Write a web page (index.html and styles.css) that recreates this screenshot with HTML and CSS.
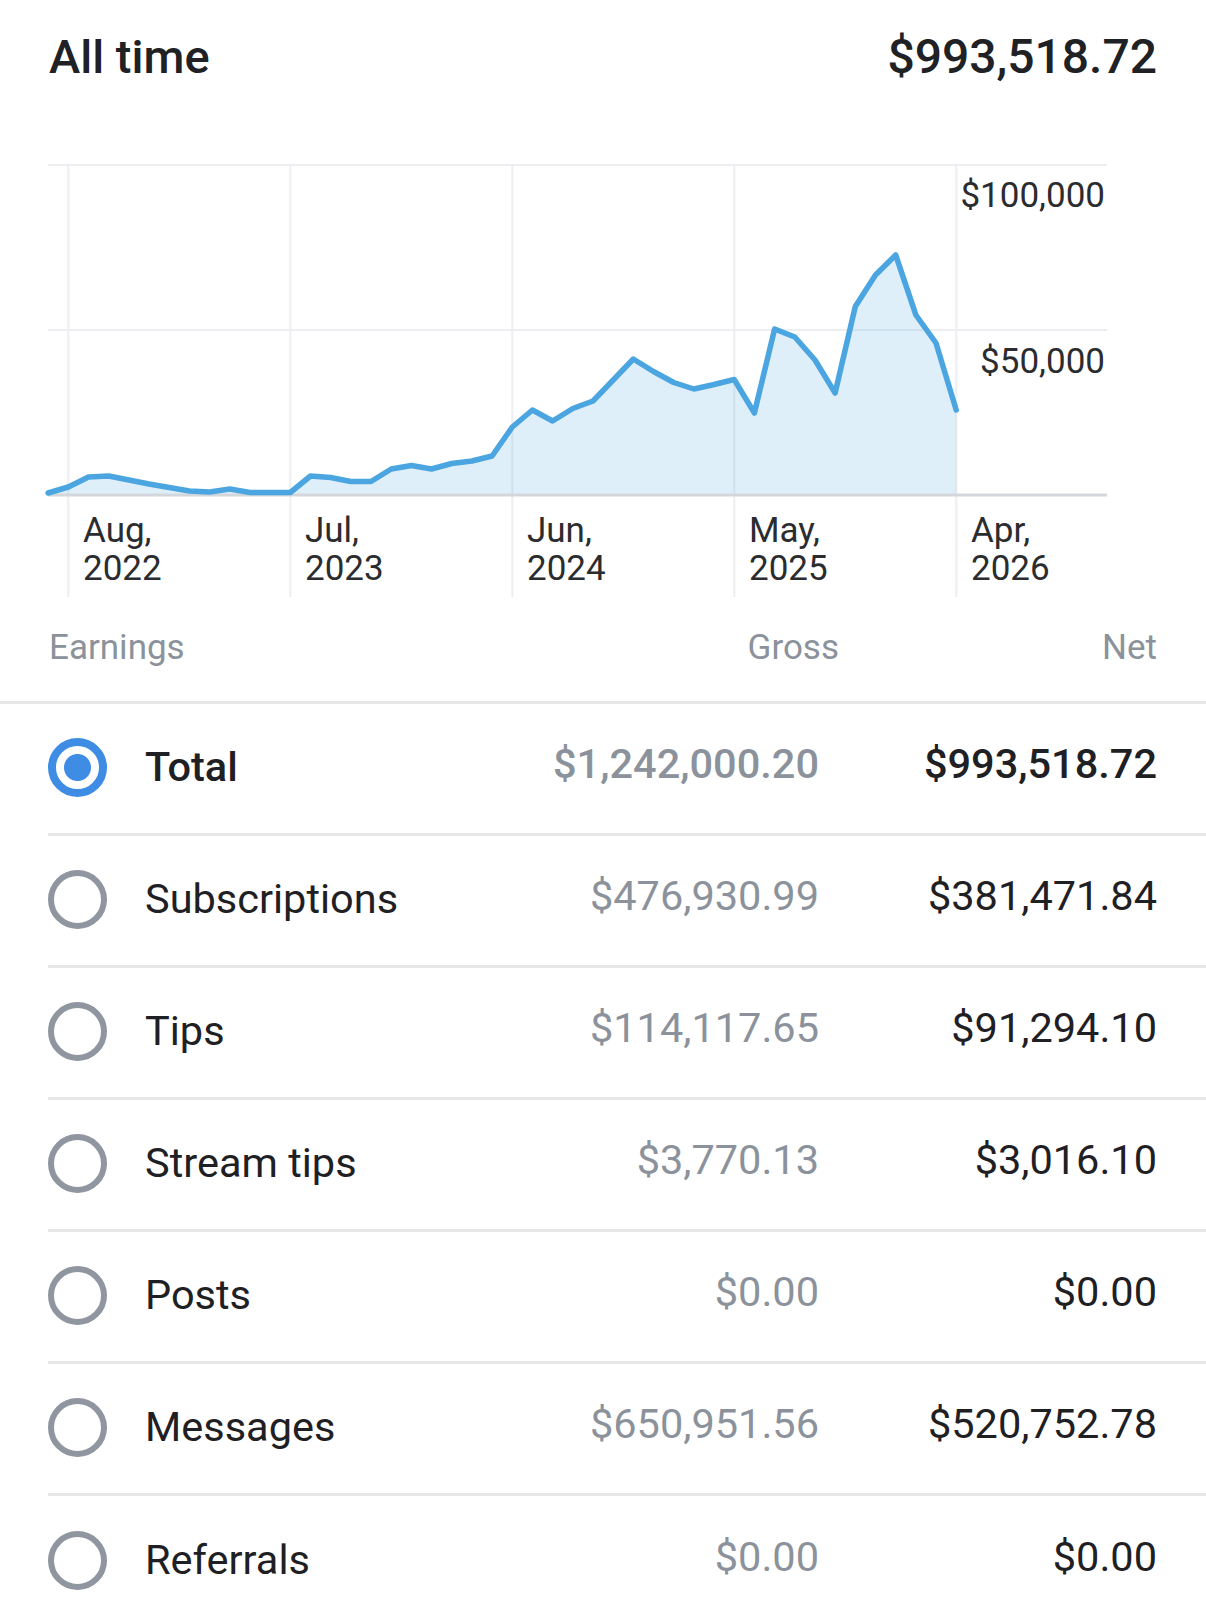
FILE: index.html
```html
<!DOCTYPE html>
<html lang="en">
<head>
<meta charset="utf-8">
<title>All time earnings</title>
<link rel="stylesheet" href="styles.css">
</head>
<body>
<div class="page">
  <header class="summary">
    <h1 class="summary-title">All time</h1>
    <div class="summary-amount">$993,518.72</div>
  </header>

  <svg class="chart" width="1206" height="460" viewBox="0 150 1206 460" xmlns="http://www.w3.org/2000/svg">
    <g class="grid">
      <line x1="48" y1="165" x2="1107" y2="165"/>
      <line x1="48" y1="330" x2="1107" y2="330"/>
      <line x1="68.3" y1="165" x2="68.3" y2="597"/>
      <line x1="290.3" y1="165" x2="290.3" y2="597"/>
      <line x1="512.3" y1="165" x2="512.3" y2="597"/>
      <line x1="734.3" y1="165" x2="734.3" y2="597"/>
      <line x1="956.3" y1="165" x2="956.3" y2="597"/>
    </g>
    <polygon class="area" points="48.1,493 68.3,487 88.5,477 108.7,476 128.9,480 149,484 169.2,487.5 189.4,491 209.6,492 229.8,489 250,492.5 270.1,492.5 290.3,492.5 310.5,476 330.6,477.5 350.8,481.5 371,481.5 391.2,469 411.4,465.5 431.5,469 451.7,463.5 471.9,461 492.1,456 512.3,427 532.4,410 552.6,421 572.8,408.5 593,401 613.2,380 633.3,359 653.5,371.5 673.7,382.5 693.9,389 714.1,384.5 734.2,379.5 754.4,413 774.6,329 794.8,337 815,360 835.1,393 855.3,306.5 875.5,275 895.7,255 915.9,315 936,343 956.2,410 956.2,495 48.1,495"/>
    <line class="axis" x1="48" y1="495" x2="1107" y2="495"/>
    <polyline class="series" points="48.1,493 68.3,487 88.5,477 108.7,476 128.9,480 149,484 169.2,487.5 189.4,491 209.6,492 229.8,489 250,492.5 270.1,492.5 290.3,492.5 310.5,476 330.6,477.5 350.8,481.5 371,481.5 391.2,469 411.4,465.5 431.5,469 451.7,463.5 471.9,461 492.1,456 512.3,427 532.4,410 552.6,421 572.8,408.5 593,401 613.2,380 633.3,359 653.5,371.5 673.7,382.5 693.9,389 714.1,384.5 734.2,379.5 754.4,413 774.6,329 794.8,337 815,360 835.1,393 855.3,306.5 875.5,275 895.7,255 915.9,315 936,343 956.2,410"/>
    <g class="y-labels">
      <text x="1105" y="207">$100,000</text>
      <text x="1105" y="373">$50,000</text>
    </g>
    <g class="x-labels">
      <text x="83" y="542">Aug,</text><text x="83" y="580">2022</text>
      <text x="305" y="542">Jul,</text><text x="305" y="580">2023</text>
      <text x="527" y="542">Jun,</text><text x="527" y="580">2024</text>
      <text x="749" y="542">May,</text><text x="749" y="580">2025</text>
      <text x="971" y="542">Apr,</text><text x="971" y="580">2026</text>
    </g>
  </svg>

  <div class="cols">
    <span class="col-name">Earnings</span>
    <span class="col-gross">Gross</span>
    <span class="col-net">Net</span>
  </div>

  <ul class="rows">
    <li class="row row-total">
      <span class="radio radio-on"></span>
      <span class="label">Total</span>
      <span class="gross">$1,242,000.20</span>
      <span class="net">$993,518.72</span>
    </li>
    <li class="row">
      <span class="radio"></span>
      <span class="label">Subscriptions</span>
      <span class="gross">$476,930.99</span>
      <span class="net">$381,471.84</span>
    </li>
    <li class="row">
      <span class="radio"></span>
      <span class="label">Tips</span>
      <span class="gross">$114,117.65</span>
      <span class="net">$91,294.10</span>
    </li>
    <li class="row">
      <span class="radio"></span>
      <span class="label">Stream tips</span>
      <span class="gross">$3,770.13</span>
      <span class="net">$3,016.10</span>
    </li>
    <li class="row">
      <span class="radio"></span>
      <span class="label">Posts</span>
      <span class="gross">$0.00</span>
      <span class="net">$0.00</span>
    </li>
    <li class="row">
      <span class="radio"></span>
      <span class="label">Messages</span>
      <span class="gross">$650,951.56</span>
      <span class="net">$520,752.78</span>
    </li>
    <li class="row row-last">
      <span class="radio"></span>
      <span class="label">Referrals</span>
      <span class="gross">$0.00</span>
      <span class="net">$0.00</span>
    </li>
  </ul>
</div>
</body>
</html>
```

FILE: styles.css
```css
* {
  box-sizing: border-box;
}

html, body {
  margin: 0;
  padding: 0;
  background: #ffffff;
}

body {
  font-family: Roboto, "Noto Sans", "Liberation Sans", sans-serif;
  color: #202124;
}

.page {
  width: 1206px;
}

.summary {
  height: 150px;
  padding: 28px 49px 0 49px;
  display: flex;
  justify-content: space-between;
  align-items: flex-start;
}

.summary-title,
.summary-amount {
  margin: 0;
  font-size: 48px;
  line-height: 58px;
  font-weight: 500;
  color: #202124;
}

.summary-title {
  font-size: 47px;
}

.chart {
  display: block;
}

.grid line {
  stroke: #eceef1;
  stroke-width: 2;
}

.area {
  fill: rgba(75, 165, 225, 0.18);
  stroke: none;
}

.axis {
  stroke: #d3d7dc;
  stroke-width: 3;
}

.series {
  fill: none;
  stroke: #4aa5e0;
  stroke-width: 5.5;
  stroke-linejoin: round;
  stroke-linecap: round;
}

.chart text {
  font-family: Roboto, "Noto Sans", "Liberation Sans", sans-serif;
  font-size: 35px;
  fill: #2b2c2f;
}

.y-labels text {
  text-anchor: end;
}

.cols {
  display: grid;
  grid-template-columns: 1fr auto 318px;
  padding: 17px 49px 32px 49px;
  border-bottom: 3px solid #e6e7e9;
  font-size: 35px;
  line-height: 42px;
  color: #8b929b;
}

.col-gross,
.col-net {
  text-align: right;
}

.rows {
  list-style: none;
  margin: 0 0 0 48px;
  padding: 0;
}

.row {
  height: 132px;
  display: grid;
  grid-template-columns: 59px 1fr auto 338px;
  align-items: center;
  padding-right: 49px;
  border-bottom: 3px solid #e6e7e9;
  font-size: 41.5px;
  line-height: 50px;
}

.row-last {
  border-bottom: none;
}

.radio {
  width: 59px;
  height: 59px;
  border-radius: 50%;
  border: 6px solid #8f96a0;
  margin-top: -3px;
}

.radio-on {
  border: 8px solid #3e8ce4;
  background: radial-gradient(circle, #3e8ce4 13px, #ffffff 14px);
}

.label {
  margin-left: 38px;
  margin-bottom: 4px;
  color: #1f2023;
}

.gross {
  text-align: right;
  color: #8b929b;
  margin-bottom: 10px;
}

.net {
  text-align: right;
  color: #1f2023;
  margin-bottom: 10px;
}

.row-total .label,
.row-total .gross,
.row-total .net {
  font-weight: 500;
}
```
